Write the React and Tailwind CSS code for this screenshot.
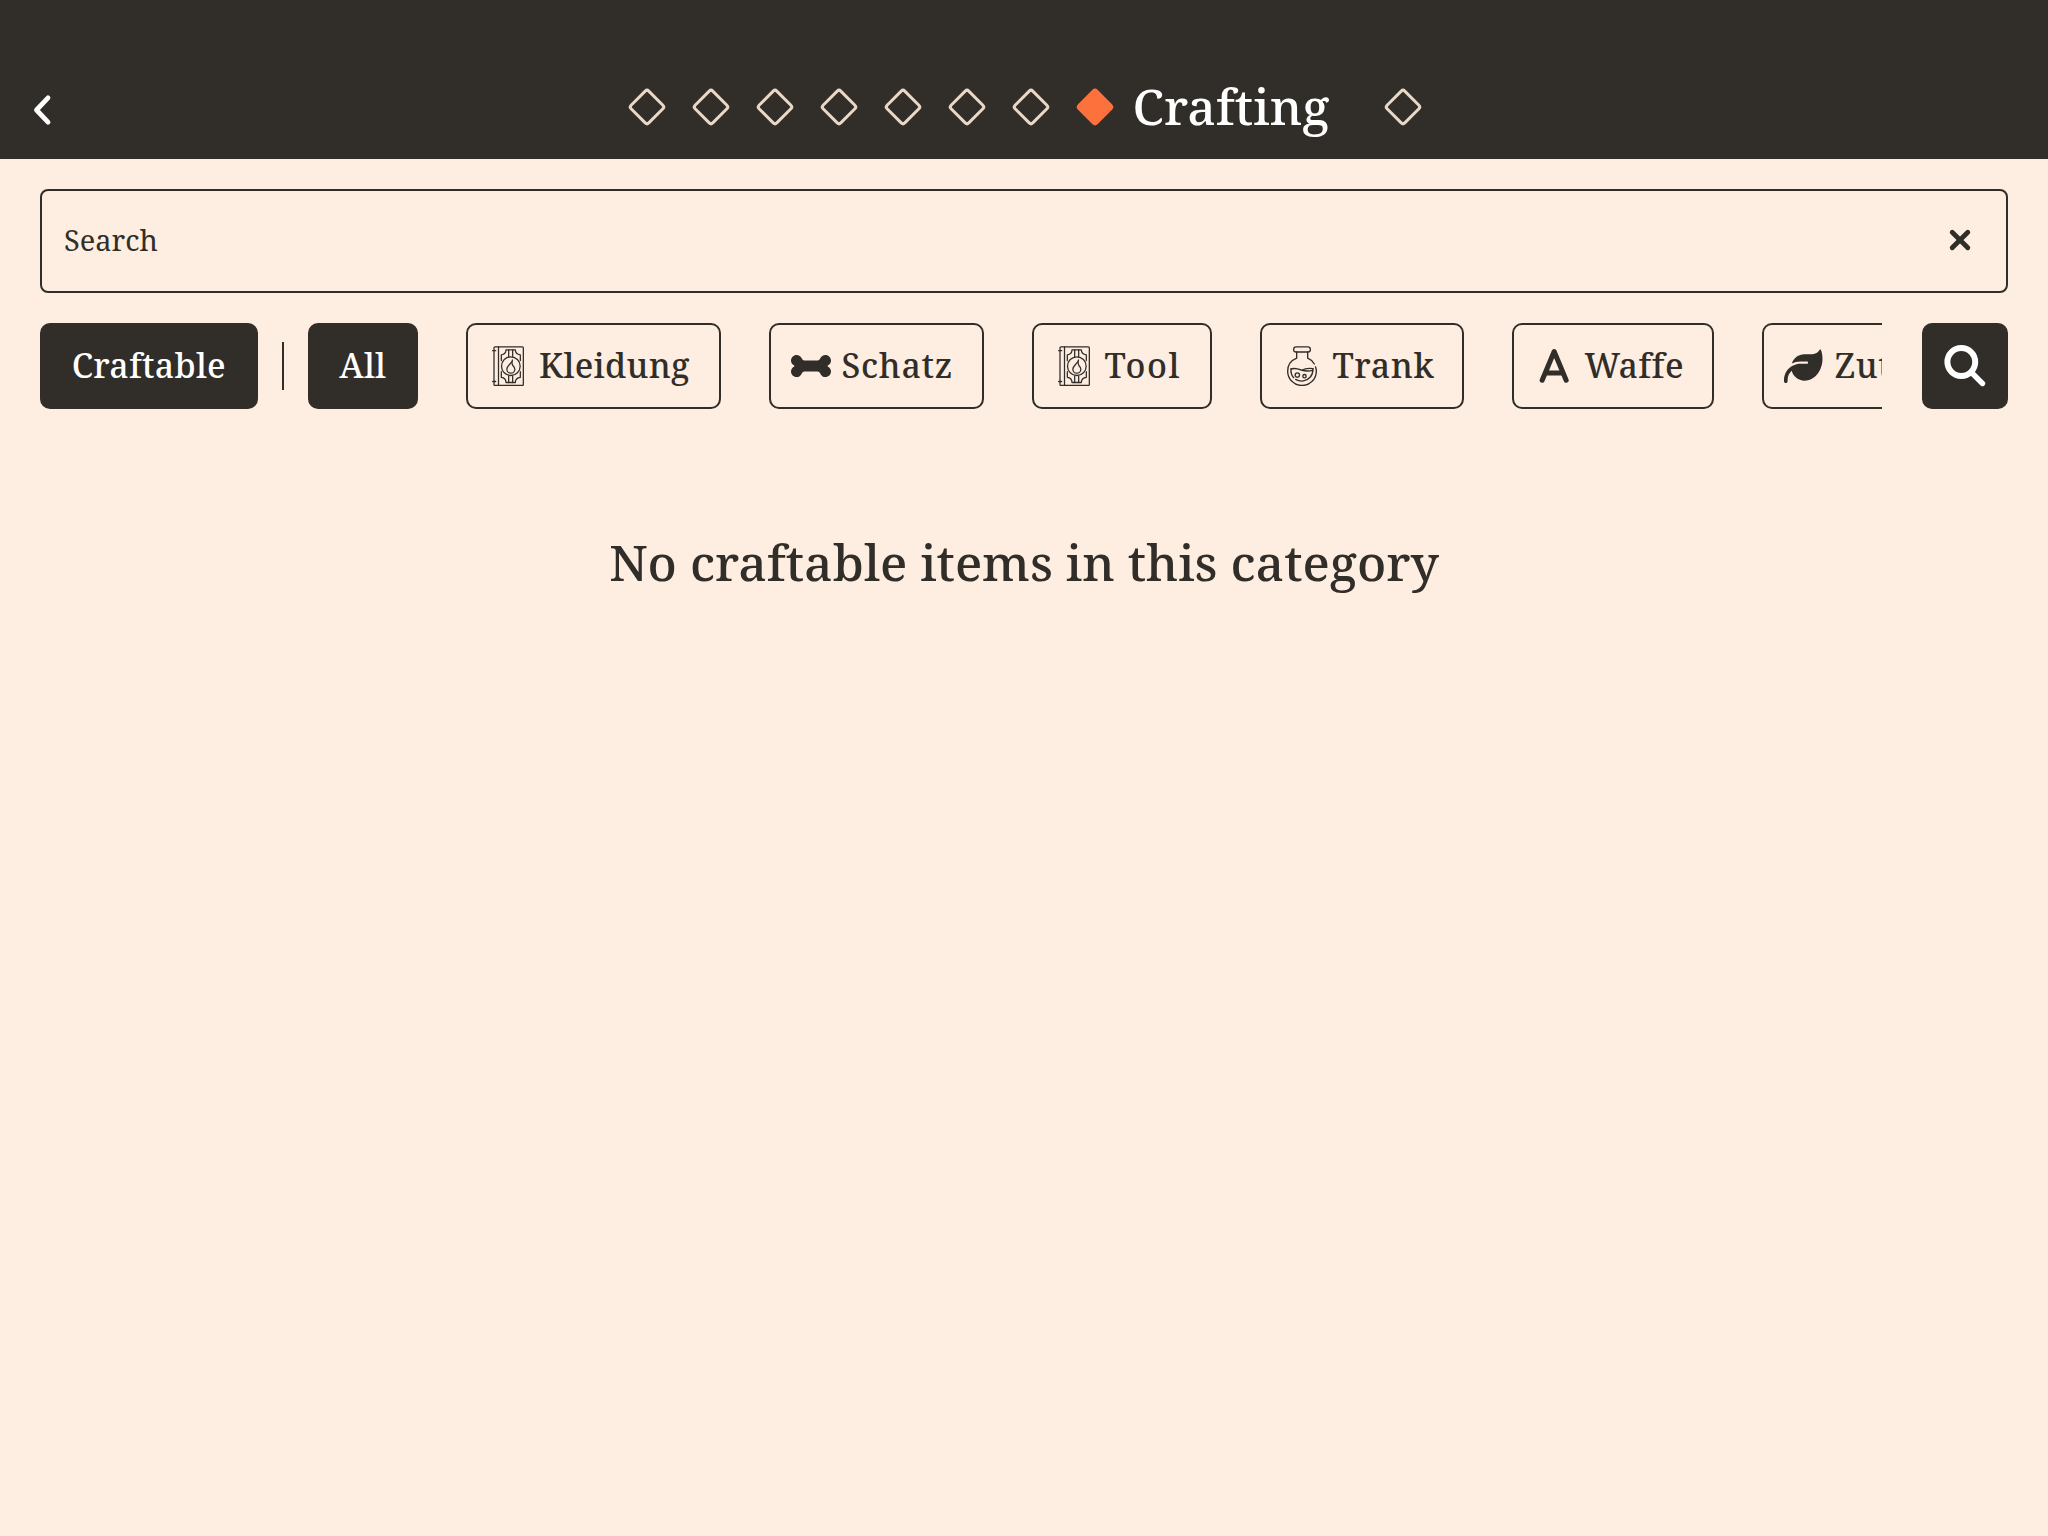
import { FaBone, FaLeaf } from "react-icons/fa6";

const strokeProps = {
  fill: "none",
  stroke: "currentColor",
  strokeLinecap: "round",
  strokeLinejoin: "round",
};

function BookIcon() {
  return (
    <svg viewBox="0 0 120 120" className="size-10" {...strokeProps} strokeWidth="3.8">
      <rect x="18" y="2.5" width="88" height="116" rx="3" />
      <path d="M31.500 2.500v116M14 14h9M14 106.500h9" />
      <path d="M54 11.500h28c0 8 6 14 15 15v17M54 11.500c0 8-6 14-14 15v17M40 77v17c8 1 14 7 14 15.500h28c0-8.500 6-14.500 15-15.500V77" />
      <path d="M62 11.500v20M74 11.500v20M62 89.500v20M74 89.500v20" />
      <circle cx="68.500" cy="60.500" r="28" />
      <path d="M73.500 42c-2 10-17 17-17 27.500a12 12 0 0 0 24 0c0-5-3-8-6-11-3-4-3-10-1-16.500z" />
    </svg>
  );
}

function FlaskIcon() {
  return (
    <svg viewBox="0 0 120 120" className="size-10" {...strokeProps} strokeWidth="4">
      <rect x="35" y="2.500" width="50" height="15.500" rx="7" />
      <path d="M44 18v18.500C28 43 17 58 17 75.500a43 43 0 0 0 86 0c0-5-1-9-2.500-13M97 54c-4.500-8-11-14-20-17.500V18" />
      <path d="M27 69c11-4 20-1 31 3 12 4 22 4 34 1M60 72c10-5 20-6 33-4" />
      <path d="M27 69c-1 12 2 20 8 26M41 100c15 9 33 6 44-7 6-7 8-15 8-25" />
      <circle cx="46" cy="87" r="6.500" />
      <circle cx="67.500" cy="90.500" r="5" />
    </svg>
  );
}

function LetterAIcon() {
  return (
    <svg viewBox="0 0 120 120" className="size-10" {...strokeProps} strokeWidth="15">
      <path d="M24.500 102.500 60.500 16.500l36 86M34 81h53" />
    </svg>
  );
}

function Diamond({ active }) {
  return (
    <span className="flex w-10 shrink-0 justify-center">
      <span
        className={
          active
            ? "size-7 rotate-45 rounded-[4px] bg-[#fd713d]"
            : "size-7 rotate-45 rounded-[4px] border-3 border-[#e9d8c6]"
        }
      />
    </span>
  );
}

const categories = [
  { label: "Kleidung", icon: <BookIcon />, width: "w-[254.500px]", spacing: "tracking-[0.300px]" },
  { label: "Schatz", icon: <FaBone className="h-9 w-[40.500px]" />, width: "w-[215px]", spacing: "tracking-[0.700px]" },
  { label: "Tool", icon: <BookIcon />, width: "w-[180px]", spacing: "tracking-[1.500px]" },
  { label: "Trank", icon: <FlaskIcon />, width: "w-[204px]", spacing: "tracking-[0.600px]" },
  { label: "Waffe", icon: <LetterAIcon />, width: "w-[202px]", spacing: "tracking-[0.400px]" },
  { label: "Zutat", icon: <FaLeaf className="size-[38.500px]" />, width: "w-[196px]", spacing: "tracking-[0.500px]" },
];

export default function App() {
  return (
    <div className="flex h-[1536px] w-[2048px] flex-col overflow-hidden bg-[#fdeee1] font-['Noto_Serif','DejaVu_Serif_Condensed','DejaVu_Serif',serif] text-[#312d29]">
      <header className="grid h-[159px] shrink-0 grid-cols-[80px_1fr_80px] items-center bg-[#312d29] pt-[56px] text-white">
        <button className="pl-[28px] pt-[4px]" aria-label="Back">
          <svg viewBox="0 0 28 32" className="h-8 w-7" {...strokeProps} strokeWidth="4.800">
            <path d="M20 3.800 8.500 16 20 28.200" />
          </svg>
        </button>
        <nav className="flex items-center justify-center gap-6 pb-px pl-[1px]">
          {[0, 1, 2, 3, 4, 5, 6].map((n) => (
            <Diamond key={n} />
          ))}
          <div className="flex w-[308px] items-center">
            <Diamond active />
            <h1 className="ml-[18px] pb-[2px] text-[50px] leading-[60px] font-medium tracking-[0] whitespace-nowrap">
              Crafting
            </h1>
          </div>
          <span className="-ml-6 flex">
            <Diamond />
          </span>
        </nav>
      </header>

      <main className="flex flex-col px-10 pt-[30px]">
        <div className="flex h-[104px] items-center justify-between rounded-[8px] border-2 border-[#312d29] pr-[34px] pl-[22px]">
          <span className="pb-[3px] text-[29px] leading-10 tracking-[0]">Search</span>
          <svg viewBox="0 0 24 24" className="mb-[2px] size-6" {...strokeProps} strokeWidth="4.800">
            <path d="m4.200 4.200 15.600 15.600M19.800 4.200 4.200 19.800" />
          </svg>
        </div>

        <div className="mt-[30px] flex h-[86px] items-center text-[34px] leading-[44px] font-medium">
          <div className="flex h-full min-w-0 flex-1 items-center overflow-hidden">
            <button className="flex h-full w-[217.500px] shrink-0 items-center justify-center rounded-[10px] bg-[#312d29] pb-[2px] tracking-[0.200px] text-white">
              Craftable
            </button>
            <div className="mx-6 h-12 w-[2px] shrink-0 bg-[#312d29]" />
            <button className="flex h-full w-[110.500px] shrink-0 items-center justify-center rounded-[10px] bg-[#312d29] pb-[2px] tracking-[0.200px] text-white">
              All
            </button>
            {categories.map(({ label, icon, width, spacing }) => (
              <button
                key={label}
                className={`ml-12 flex h-full shrink-0 items-center gap-[11px] rounded-[10px] border-2 border-[#312d29] pl-[20px] ${width}`}
              >
                <span className="flex w-10 shrink-0 justify-center">{icon}</span>
                <span className={`pb-[2px] ${spacing}`}>{label}</span>
              </button>
            ))}
          </div>
          <button className="ml-10 size-[86px] shrink-0 rounded-[10px] bg-[#312d29] text-white" aria-label="Search">
            <svg viewBox="0 0 86 86" className="size-full" {...strokeProps}>
              <circle cx="39.300" cy="39" r="13.900" strokeWidth="6" />
              <path d="M49.500 49.500 60.500 60.500" strokeWidth="5.400" />
            </svg>
          </button>
        </div>

        <p className="mt-[123px] text-center text-[50px] leading-[60px] font-medium tracking-[-0.030px]">
          No craftable items in this category
        </p>
      </main>
    </div>
  );
}
